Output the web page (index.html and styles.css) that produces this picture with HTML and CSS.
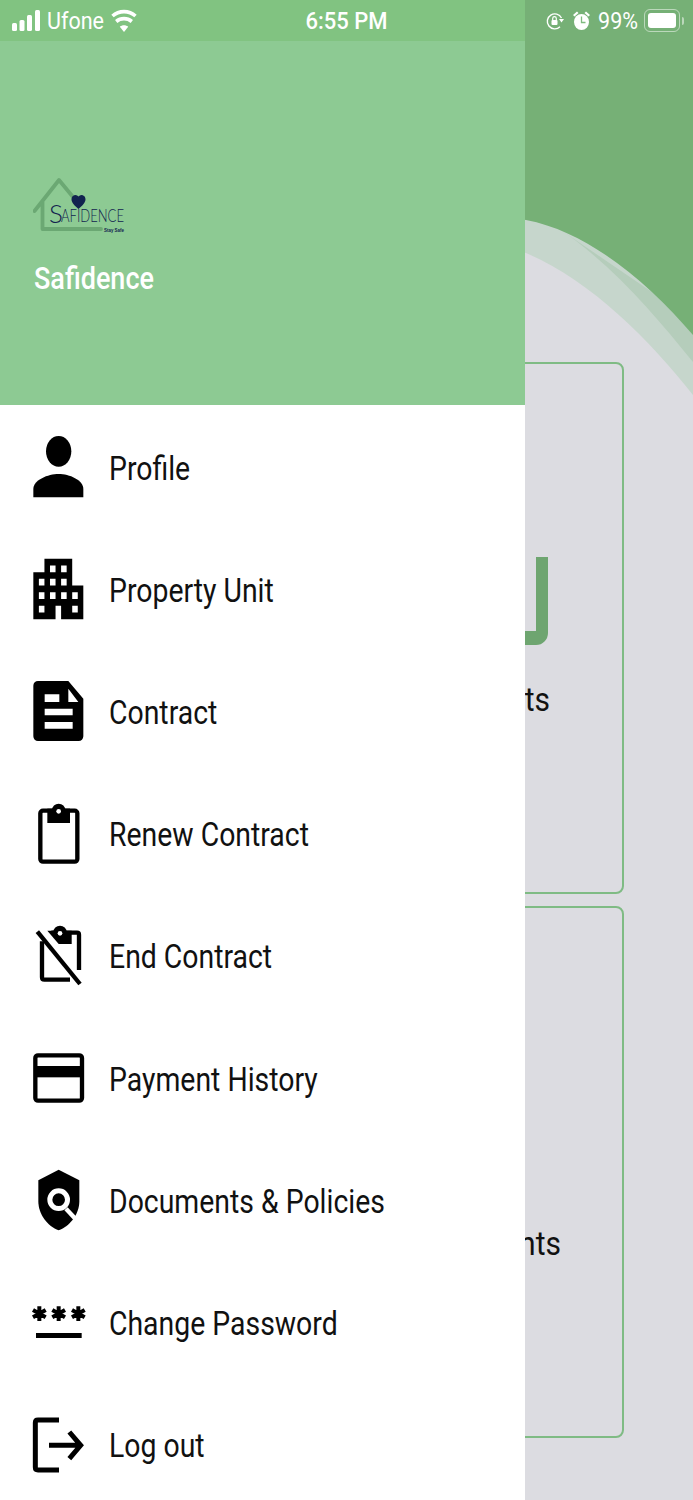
FILE: index.html
```html
<!DOCTYPE html>
<html lang="en">
<head>
  <meta charset="UTF-8" />
  <meta name="viewport" content="width=device-width, initial-scale=1.0" />
  <title>Safidence</title>
  <link rel="stylesheet" href="styles.css">
</head>
<body>
  <div class="screen">
    <!-- page behind the drawer -->
    <svg class="curves" viewBox="0 0 693 420" aria-hidden="true">
      <path fill="#c6d6cc" d="M400 200H693V395C650 340 590 280 526 253L400 215Z" />
      <path fill="#b5cdbb" d="M555 226C610 262 655 315 693 362V320Z" />
      <path fill="#76b076" d="M400 0H693V335C650 285 590 232 526 220L400 200Z" />
    </svg>
    <div class="cards">
      <div class="card">
        <div class="card-media">
          <svg width="62" height="102" viewBox="0 0 62 102" aria-hidden="true">
            <path fill="#6ea570" d="M48 12H60V88A12 12 0 0 1 48 100H0V86H48Z" />
            <rect x="35" y="0" width="2" height="67" fill="#7ab07c" />
          </svg>
        </div>
        <p class="card-label"><span>Requests</span></p>
      </div>
      <div class="card">
        <div class="card-media"></div>
        <p class="card-label card-label-wide"><span>Complaints</span></p>
      </div>
    </div>

    <div class="drawer">
      <div class="drawer-strip"></div>
      <div class="drawer-head">
        <svg class="logo" width="120" height="60" viewBox="0 0 120 60" role="img" aria-label="Safidence logo">
          <path fill="none" stroke="#6ba873" stroke-width="3.800" stroke-linecap="round" stroke-linejoin="round" d="M1.500 34L26 3L40 20M9.500 25V52H68" />
          <path fill="#12234f" d="M45.500 32C39 26.500 38.500 24 38.500 22A3.900 3.900 0 0 1 45.500 19.500A3.900 3.900 0 0 1 52.500 22C52.500 24 52 26.500 45.500 32Z" />
          <text class="logo-s" x="16" y="46">S</text>
          <text class="logo-name" x="28" y="45" textLength="63" lengthAdjust="spacingAndGlyphs">AFIDENCE</text>
          <text class="logo-tag" x="71" y="54.500" textLength="20" lengthAdjust="spacingAndGlyphs">Stay Safe</text>
        </svg>
        <div class="brand"><span>Safidence</span></div>
      </div>
      <ul class="menu">
        <li class="menu-item">
          <svg class="menu-icon" viewBox="0 0 180 198" aria-hidden="true">
            <ellipse cx="92" cy="49" rx="38" ry="46" />
            <path d="M16 187V162C16 135 60 117 92 117S166 135 166 162V187Z" />
          </svg>
          <span class="menu-text">Profile</span>
        </li>
        <li class="menu-item">
          <svg class="menu-icon" viewBox="0 0 180 198" aria-hidden="true">
            <g transform="translate(16 5) scale(8.33 10.1) translate(-3 -3)">
              <path d="M17 11V3H7v4H3v14h8v-4h2v4h8V11h-4zM7 19H5v-2h2v2zm0-4H5v-2h2v2zm0-4H5V9h2v2zm4 4H9v-2h2v2zm0-4H9V9h2v2zm0-4H9V5h2v2zm4 8h-2v-2h2v2zm0-4h-2V9h2v2zm0-4h-2V5h2v2zm4 12h-2v-2h2v2zm0-4h-2v-2h2v2z" />
            </g>
          </svg>
          <span class="menu-text">Property Unit</span>
        </li>
        <li class="menu-item">
          <svg class="menu-icon" viewBox="0 0 180 198" aria-hidden="true">
            <path fill-rule="evenodd" d="M30 6H121L166 59V172A14 14 0 0 1 152 186H30A14 14 0 0 1 16 172V20A14 14 0 0 1 30 6ZM50 46V69H94V46ZM121 29V69H151ZM50 89V109H134V89ZM50 129V149H134V129Z" />
          </svg>
          <span class="menu-text">Contract</span>
        </li>
        <li class="menu-item">
          <svg class="menu-icon" viewBox="0 0 180 198" aria-hidden="true">
            <rect x="37" y="26" width="111" height="153" rx="8" fill="none" stroke="#000" stroke-width="13" />
            <rect x="58" y="20" width="68" height="43" />
            <circle cx="92" cy="25" r="20" />
            <circle cx="92" cy="28" r="7" fill="#fff" />
          </svg>
          <span class="menu-text">Renew Contract</span>
        </li>
        <li class="menu-item">
          <svg class="menu-icon" viewBox="0 0 180 198" aria-hidden="true">
            <path fill="none" stroke="#000" stroke-width="13" d="M42 52V160Q42 167 49 167H126M70 26H147Q153 26 153 32V138" />
            <path d="M58 20H131V60H92Z" />
            <circle cx="96" cy="25" r="20" />
            <circle cx="96" cy="28" r="7" fill="#fff" />
            <path stroke="#000" stroke-width="13" d="M28 23L156 180" />
          </svg>
          <span class="menu-text">End Contract</span>
        </li>
        <li class="menu-item">
          <svg class="menu-icon" viewBox="0 0 180 198" aria-hidden="true">
            <rect x="22" y="28" width="140" height="136" rx="8" fill="none" stroke="#000" stroke-width="13" />
            <rect x="22" y="60" width="140" height="34" />
          </svg>
          <span class="menu-text">Payment History</span>
        </li>
        <li class="menu-item">
          <svg class="menu-icon" viewBox="0 0 180 198" aria-hidden="true">
            <path d="M92 5L154 37V100C154 140 125 175 92 187C59 175 31 140 31 100V37Z" />
            <circle cx="92" cy="95" r="26.500" fill="none" stroke="#fff" stroke-width="15" />
            <path stroke="#fff" stroke-width="13" d="M114 122L142 152" />
          </svg>
          <span class="menu-text">Documents &amp; Policies</span>
        </li>
        <li class="menu-item">
          <svg class="menu-icon" viewBox="0 0 180 198" aria-hidden="true">
            <path stroke="#000" stroke-width="12" d="M34 49V93M15 60L53 82M15 82L53 60M92 49V93M73 60L111 82M73 82L111 60M151 49V93M132 60L170 82M132 82L170 60" />
            <rect x="24" y="129" width="137" height="15" />
          </svg>
          <span class="menu-text">Change Password</span>
        </li>
        <li class="menu-item">
          <svg class="menu-icon" viewBox="0 0 180 198" aria-hidden="true">
            <path fill="none" stroke="#000" stroke-width="15" d="M93 21H30Q22 21 22 29V163Q22 171 30 171H93M63 97H150M124 57L158 97L124 137" />
          </svg>
          <span class="menu-text">Log out</span>
        </li>
      </ul>
    </div>

    <div class="status-bar">
      <div class="status-left">
        <svg width="29" height="22" viewBox="0 0 29 22" aria-hidden="true">
          <rect x="0" y="13" width="5" height="8" rx="1.500" />
          <rect x="7.500" y="10" width="5" height="11" rx="1.500" />
          <rect x="15" y="5" width="5" height="16" rx="1.500" />
          <rect x="23" y="0" width="5" height="21" rx="1.500" />
        </svg>
        <span class="status-text">Ufone</span>
        <svg class="wifi" width="26" height="23" viewBox="0 0 26 23" aria-hidden="true">
          <path d="M13 23L8.800 17.800C11.300 15.800 14.700 15.800 17.200 17.800Z" />
          <path fill="none" stroke="#fff" stroke-width="3.600" d="M5.200 12.500C9.700 8.700 16.300 8.700 20.800 12.500M1.500 7C8 1.200 18 1.200 24.500 7" />
        </svg>
      </div>
      <span class="status-text status-time">6:55 PM</span>
      <div class="status-right">
        <svg width="18" height="20" viewBox="0 0 18 20" aria-hidden="true">
          <path fill="none" stroke="#fff" stroke-width="1.400" d="M15.500 7A7.500 7.500 0 1 0 14 15.800" />
          <path d="M13 8H18L15.500 11.500Z" />
          <rect x="5.500" y="9" width="6" height="5" rx="1" />
          <path fill="none" stroke="#fff" stroke-width="1.200" d="M6.700 9V7.500A1.800 1.800 0 0 1 10.300 7.500V9" />
        </svg>
        <svg class="alarm" width="17" height="20" viewBox="0 0 17 20" aria-hidden="true">
          <ellipse cx="8.500" cy="11" rx="7.500" ry="8" />
          <path d="M0 4L4 0.500L5.500 2L1.500 5.500ZM17 4L13 0.500L11.500 2L15.500 5.500Z" />
          <path fill="none" stroke="#7fbb7f" stroke-width="1.300" d="M8.500 5.500V11.500H12.500" />
        </svg>
        <span class="status-text status-pct">99%</span>
        <div class="battery"><div class="battery-fill"></div></div>
        <div class="battery-nub"></div>
      </div>
    </div>
  </div>
</body>
</html>
```

FILE: styles.css
```css
* {
  box-sizing: border-box;
}
html, body {
  margin: 0;
  padding: 0;
}
body {
  font-family: Roboto, "Liberation Sans", sans-serif;
  background: #dcdce1;
}
.screen {
  position: relative;
  width: 693px;
  height: 1500px;
  overflow: hidden;
  background: #dcdce1;
}
.curves {
  position: absolute;
  top: 0;
  left: 0;
  width: 693px;
  height: 420px;
}

/* page behind the drawer */
.cards {
  position: relative;
  display: flex;
  flex-direction: column;
  gap: 12px;
  padding: 362px 69px 0 70px;
}
.card {
  display: flex;
  flex-direction: column;
  align-items: flex-end;
  height: 532px;
  padding: 181px 72px 0 0;
  border: 2px solid #7fbb84;
  border-radius: 8px;
}
.card-media {
  height: 102px;
}
.card-label {
  margin: 33px 0 0;
  font-size: 30px;
  line-height: 40px;
  color: #111;
}
.card-label span {
  display: inline-block;
  transform: scaleY(1.13);
}
.card-label-wide {
  margin-right: -11px;
}

/* drawer */
.drawer {
  position: absolute;
  top: 0;
  left: 0;
  display: flex;
  flex-direction: column;
  width: 525px;
  height: 1500px;
  background: #fff;
  overflow: hidden;
}
.drawer-strip {
  flex: none;
  height: 41px;
  background: #81c381;
}
.drawer-head {
  flex: none;
  height: 364px;
  padding: 136px 0 0 33px;
  background: #8dca93;
}
.logo {
  display: block;
}
.logo-s {
  font: 300 26px Lato, "Liberation Sans", sans-serif;
  fill: #12234f;
}
.logo-name {
  font: 300 17px Lato, "Liberation Sans", sans-serif;
  fill: #12234f;
}
.logo-tag {
  font: 700 5px "Liberation Sans", sans-serif;
  fill: #12234f;
}
.brand {
  margin: 24px 0 0 1px;
  font-size: 27px;
  font-weight: 500;
  line-height: 36px;
  color: #fff;
}
.brand span {
  display: inline-block;
  transform: scaleY(1.13);
}
.menu {
  flex: none;
  margin: 0;
  padding: 2px 0 0;
  list-style: none;
}
.menu-item {
  display: flex;
  align-items: center;
  gap: 21px;
  height: 122.2px;
  padding-left: 28px;
}
.menu-icon {
  flex: none;
  width: 60px;
  height: 66px;
}
.menu-text {
  display: inline-block;
  font-size: 28.4px;
  color: #111;
  transform: scaleY(1.19);
}

/* status bar */
.status-bar {
  position: absolute;
  top: 0;
  left: 0;
  display: grid;
  grid-template-columns: 1fr auto 1fr;
  align-items: center;
  width: 100%;
  height: 41px;
  padding: 0 12px;
  color: #fff;
  fill: #fff;
}
.status-left,
.status-right {
  display: flex;
  align-items: center;
}
.status-right {
  justify-content: flex-end;
  margin-right: -3px;
}
.status-text {
  display: inline-block;
  font-size: 21.500px;
  line-height: 41px;
  transform: scaleY(1.1);
}
.status-left .status-text {
  margin-left: 6px;
}
.wifi {
  margin-left: 7px;
}
.status-time {
  font-size: 22px;
  font-weight: 500;
}
.alarm {
  margin-left: 9px;
}
.status-pct {
  margin-left: 8px;
}
.battery {
  width: 36px;
  height: 23px;
  margin-left: 6px;
  padding: 3px;
  border: 1.5px solid rgba(255, 255, 255, 0.5);
  border-radius: 6px;
}
.battery-fill {
  height: 100%;
  background: #fff;
  border-radius: 3px;
}
.battery-nub {
  width: 2px;
  height: 8px;
  margin-left: 2px;
  background: rgba(255, 255, 255, 0.5);
  border-radius: 0 2px 2px 0;
}
```
